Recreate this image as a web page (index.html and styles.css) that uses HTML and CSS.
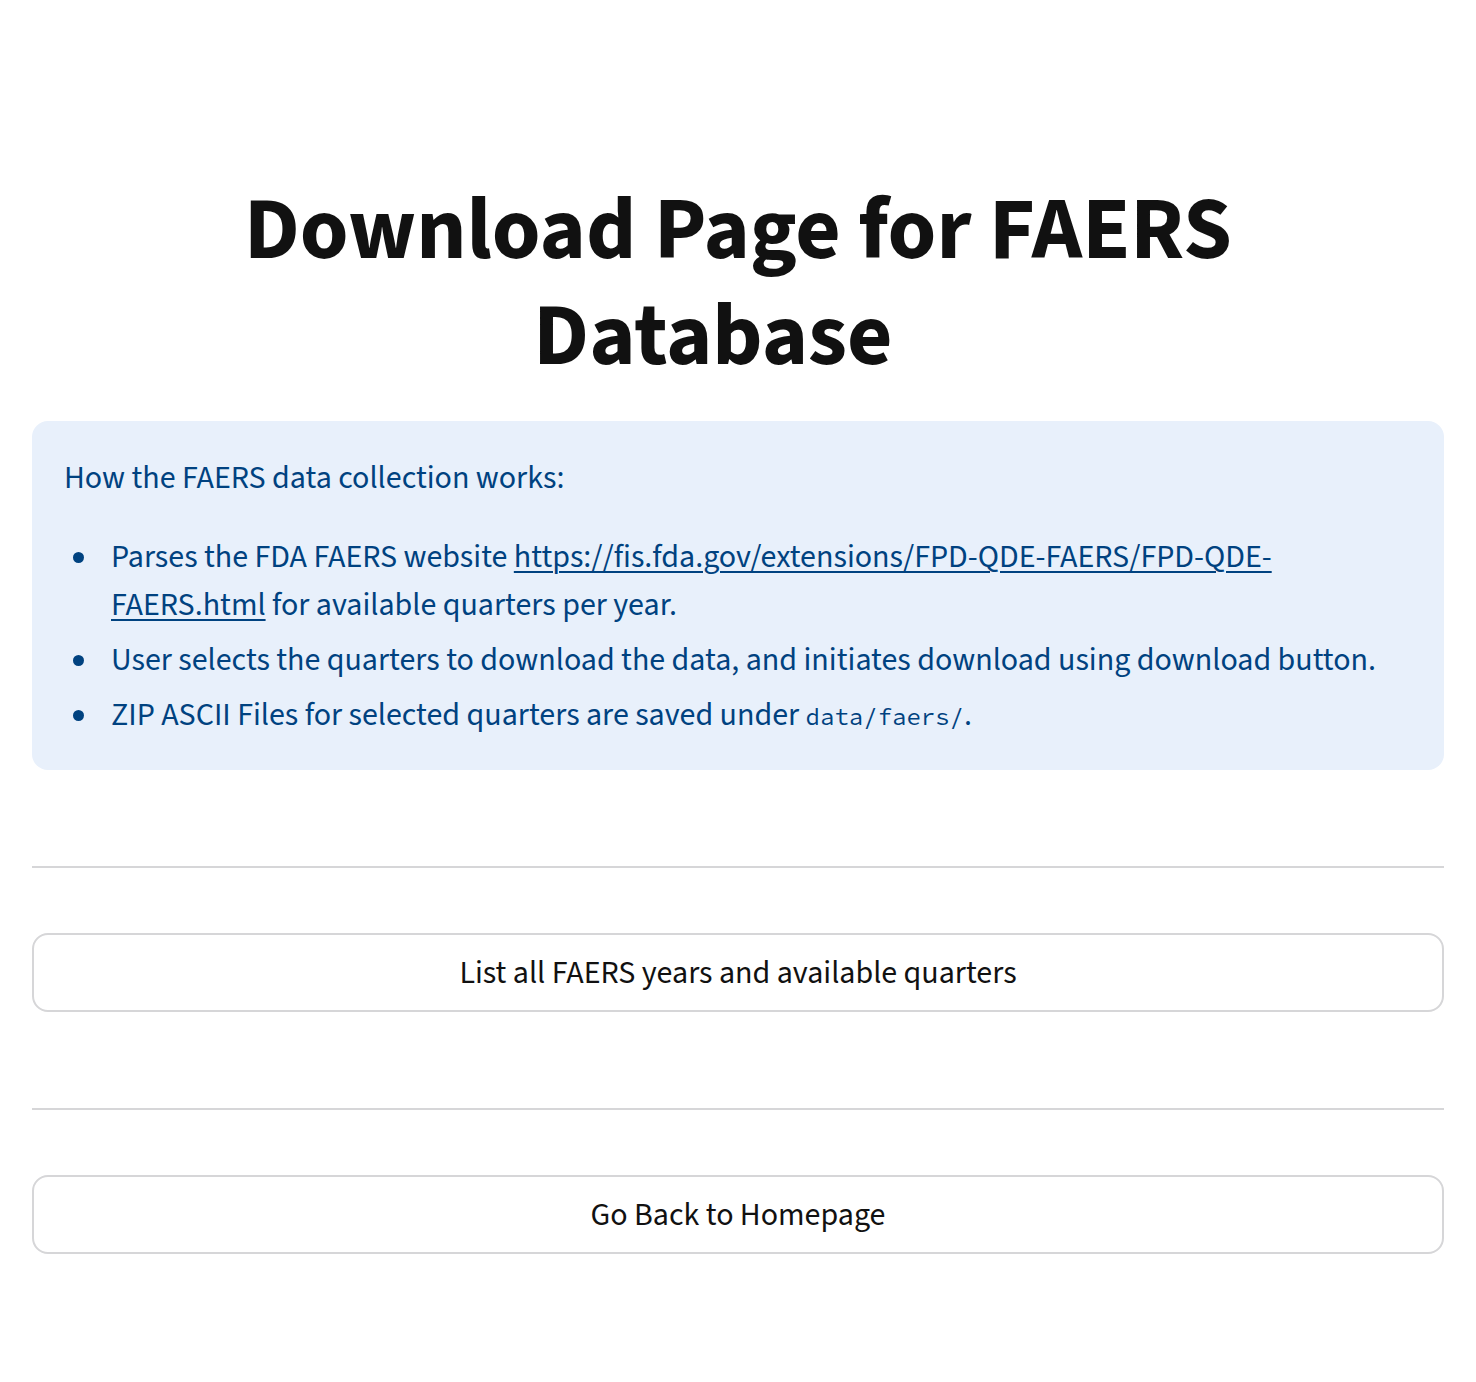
FILE: index.html
```html
<!DOCTYPE html>
<html lang="en">
<head>
<meta charset="utf-8">
<title>Download Page for FAERS Database</title>
<link rel="stylesheet" href="styles.css">
</head>
<body>
<main class="page">
  <h1 class="title">Download Page for FAERS Database<span class="title-anchor"></span></h1>
  <div class="info">
    <p class="info-lead">How the FAERS data collection works:</p>
    <ul class="info-list">
      <li>Parses the FDA FAERS website <a href="#">https://fis.fda.gov/extensions/FPD-QDE-FAERS/FPD-QDE-FAERS.html</a> for available quarters per year.</li>
      <li>User selects the quarters to download the data, and initiates download using download button.</li>
      <li>ZIP ASCII Files for selected quarters are saved under <code>data/faers/</code>.</li>
    </ul>
  </div>
  <hr class="rule rule-first">
  <button class="btn" type="button">List all FAERS years and available quarters</button>
  <hr class="rule">
  <button class="btn" type="button">Go Back to Homepage</button>
</main>
</body>
</html>
```
FILE: styles.css
```css
html, body {
  margin: 0;
  padding: 0;
  background: #ffffff;
}

body {
  font-family: "Source Sans 3", "Source Sans Pro", Lato, sans-serif;
  color: #111111;
}

.page {
  width: 1412px;
  margin: 0 auto;
  padding: 178px 0 120px;
  display: flex;
  flex-direction: column;
}

.title {
  margin: 0 auto 32px;
  max-width: 1100px;
  font-size: 88px;
  line-height: 1.2;
  font-weight: 700;
  text-align: center;
  color: #111111;
}

.title-anchor {
  display: inline-block;
  width: 50px;
  height: 1px;
}

.info {
  background: #e8f0fb;
  border-radius: 16px;
  padding: 32px 32px 29px;
  color: #004280;
  font-size: 32px;
  line-height: 1.6;
}

.info-lead {
  margin: 0 0 29px;
}

.info-list {
  margin: 0;
  padding-left: 47px;
  list-style: none;
  line-height: 48px;
}

.info-list li {
  position: relative;
  margin: 0;
}

.info-list li + li {
  margin-top: 7px;
}

.info-list li::before {
  content: "";
  position: absolute;
  left: -38px;
  top: 19px;
  width: 11px;
  height: 11px;
  border-radius: 50%;
  background: #004280;
}

.info-list a {
  color: #004280;
  text-decoration: underline;
  text-underline-offset: 4px;
  text-decoration-thickness: 2px;
}

.info-list code {
  font-family: "Source Code Pro", "Liberation Mono", "DejaVu Sans Mono", monospace;
  font-size: 24px;
  color: #004280;
}

.rule {
  border: none;
  border-top: 2px solid #d6d6d8;
  margin: 96px 0 65px;
  width: 100%;
}

.btn {
  display: block;
  width: 100%;
  height: 79px;
  border: 2px solid #d6d6d8;
  border-radius: 16px;
  background: #ffffff;
  font-family: inherit;
  font-size: 32px;
  color: #111111;
  cursor: pointer;
  padding: 0 24px;
}
```
